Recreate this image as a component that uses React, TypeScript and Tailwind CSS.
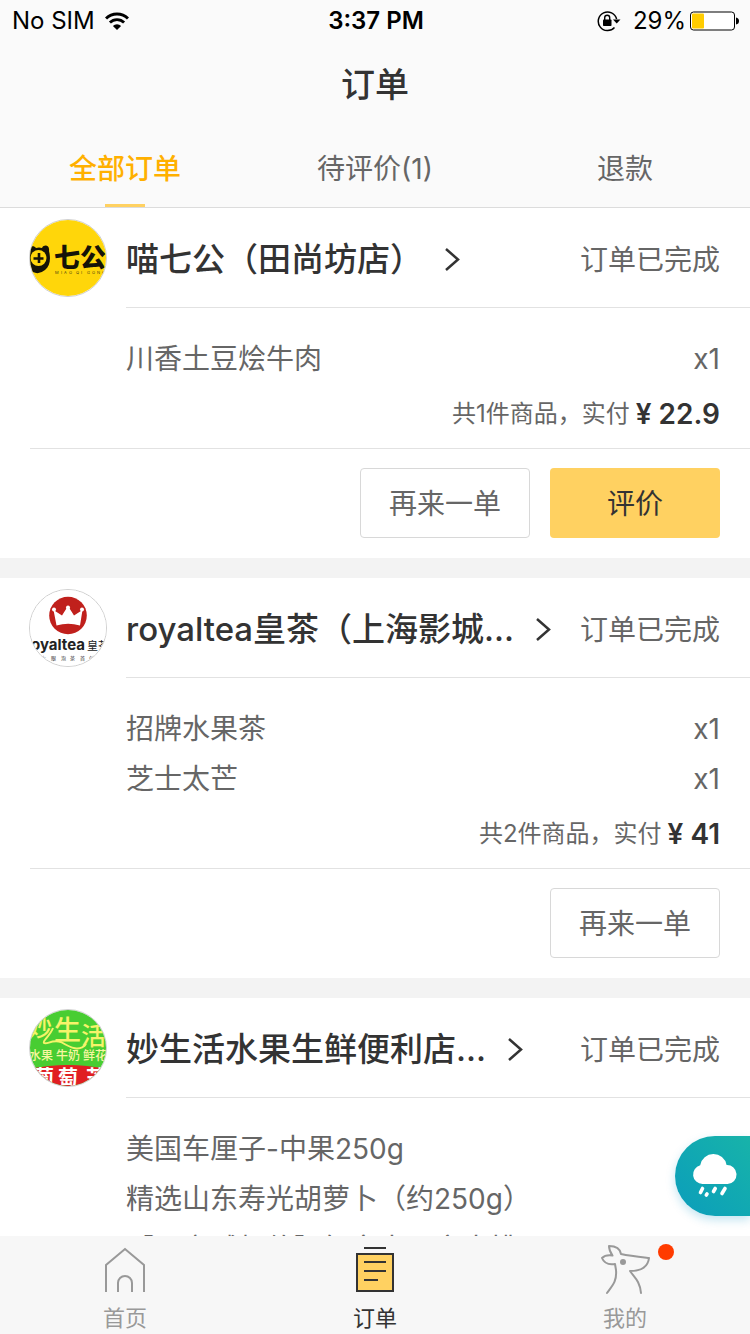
import React from "react";

type Item = { name: string; qty: number };
type Order = {
  shop: string;
  logo: React.ReactNode;
  status: string;
  items: Item[];
  total?: { count: number; price: string };
  canReview?: boolean;
};

const cjk = "'Noto Sans CJK SC', sans-serif";

function CatLogo() {
  return (
    <svg viewBox="0 0 76 76" className="size-full" aria-hidden="true">
      <rect width="76" height="76" fill="#ffd60a" />
      <path d="M0 29 C0 26 4 25 6 28 Q9 27 12 28 C14 24 20 25 19 31 C21 39 20 46 15 50 Q9 55 3 52 L0 50 Z" fill="#151308" />
      <circle cx="8.500" cy="38" r="8" fill="#ffd60a" />
      <path d="M3.500 38.500 H13.500 M9 33 V43" stroke="#151308" strokeWidth="2.600" />
      <text x="24" y="47" fontSize="26" fontWeight="900" fill="#151308" fontFamily={cjk}>七</text>
      <text x="50" y="47" fontSize="26" fontWeight="900" fill="#151308" fontFamily={cjk}>公</text>
      <text x="25 31 34 39 46 51 57 62 67 72" y="54" fontSize="4" fill="#4c4310" fontFamily="Inter, sans-serif">MIAOQIGONG</text>
    </svg>
  );
}

function TeaLogo() {
  return (
    <svg viewBox="0 0 76 76" className="size-full" aria-hidden="true">
      <rect width="76" height="76" fill="#fff" />
      <circle cx="38" cy="25.500" r="18.800" fill="#c0201c" />
      <path d="M26.500 35.500 L23.500 20 L32 25.500 L38 16 L44 25.500 L52.500 20 L50 35.500 Q38 32 26.500 35.500 Z" fill="#fff" />
      <circle cx="24" cy="19.500" r="2" fill="#fff" />
      <circle cx="38" cy="17.500" r="2" fill="#fff" />
      <circle cx="52" cy="19.500" r="2" fill="#fff" />
      <text x="55" y="60" textAnchor="end" fontSize="15" fontWeight="700" fill="#222" fontFamily="Inter, sans-serif">royaltea</text>
      <text x="57" y="60" fontSize="11" fill="#222" fontFamily={cjk}>皇茶</text>
      <text y="70" fontSize="5" fill="#333" fontFamily={cjk}>
        <tspan x="11">大</tspan><tspan x="21">眼</tspan><tspan x="31">泡</tspan><tspan x="40">茶</tspan><tspan x="50">首</tspan><tspan x="59">创</tspan>
      </text>
    </svg>
  );
}

function FruitLogo() {
  return (
    <svg viewBox="0 0 76 76" className="size-full" aria-hidden="true">
      <rect width="76" height="76" fill="#48cd32" />
      <path d="M0 59 Q38 51 76 59 V76 H0 Z" fill="#e01e22" />
      <text fontFamily={cjk} fontWeight="500" fill="#f6f36a">
        <tspan x="-2" y="26" fontSize="24">妙</tspan><tspan x="24" y="30" fontSize="27">生</tspan><tspan x="51" y="35" fontSize="25">活</tspan>
      </text>
      <path d="M23 18 C20 26 12 31 14 33 C17 35 22 29 31 32 C41 38 50 42 56 34" fill="none" stroke="#f6f36a" strokeWidth="2" />
      <text fontFamily={cjk} fontSize="12" fontWeight="500" fill="#f8f6a0" y="50">
        <tspan x="-1">水果</tspan><tspan x="26">牛奶</tspan><tspan x="53">鲜花</tspan>
      </text>
      <text fontFamily={cjk} fontSize="20" fontWeight="700" fill="#fff" y="75">
        <tspan x="4">葡</tspan><tspan x="28">萄</tspan><tspan x="56">芒</tspan>
      </text>
    </svg>
  );
}

const orders: Order[] = [
  {
    shop: "喵七公（田尚坊店）",
    logo: <CatLogo />,
    status: "订单已完成",
    items: [{ name: "川香土豆烩牛肉", qty: 1 }],
    total: { count: 1, price: "22.9" },
    canReview: true,
  },
  {
    shop: "royaltea皇茶（上海影城...",
    logo: <TeaLogo />,
    status: "订单已完成",
    items: [
      { name: "招牌水果茶", qty: 1 },
      { name: "芝士太芒", qty: 1 },
    ],
    total: { count: 2, price: "41" },
  },
  {
    shop: "妙生活水果生鲜便利店...",
    logo: <FruitLogo />,
    status: "订单已完成",
    items: [
      { name: "美国车厘子-中果250g", qty: 0 },
      { name: "精选山东寿光胡萝卜（约250g）", qty: 0 },
      { name: "【买立减超值】红富士国产大桃", qty: 0 },
    ],
  },
];

const tabs = [
  { label: "全部订单", href: "#all", active: true },
  { label: "待评价(1)", href: "#review", active: false },
  { label: "退款", href: "#refund", active: false },
];

function StatusBar() {
  return (
    <div className="grid h-10 grid-cols-3 items-center pt-px pr-2.5 pl-3 text-2xl text-black">
      <div className="flex items-center gap-2.5">
        <span>No SIM</span>
        <svg viewBox="0 0 24 18" className="h-[18px] w-6" aria-label="Wi-Fi">
          <path d="M1 6.500 A15.500 15.500 0 0 1 23 6.500" fill="none" stroke="#000" strokeWidth="3" />
          <path d="M4.900 10.600 A10 10 0 0 1 19.100 10.600" fill="none" stroke="#000" strokeWidth="2.800" />
          <path d="M12 18 L7.900 13.900 A5.800 5.800 0 0 1 16.100 13.900 Z" fill="#000" />
        </svg>
      </div>
      <div className="text-center font-semibold whitespace-nowrap">3:37 PM</div>
      <div className="flex items-center justify-end">
        <svg viewBox="0 0 24 22" className="mr-3 h-[22px] w-6" aria-label="Rotation lock">
          <path d="M19.600 9 A9.300 9.300 0 1 0 17.500 17.500" fill="none" stroke="#000" strokeWidth="1.500" />
          <path d="M16 9.500 H23.500 L19.700 13.500 Z" fill="#000" />
          <rect x="6" y="9.500" width="8.500" height="6.500" rx="0.800" fill="#000" />
          <path d="M7.700 10 V7.800 A2.500 2.500 0 0 1 12.700 7.800 V10" fill="none" stroke="#000" strokeWidth="1.400" />
        </svg>
        <span className="mr-1">29%</span>
        <svg viewBox="0 0 50 20" className="h-5 w-[50px]" aria-label="Battery">
          <rect x="0.500" y="1" width="44" height="18" rx="3" fill="#fff" stroke="#000" />
          <rect x="2" y="2.500" width="12" height="15" rx="1" fill="#ffcc00" />
          <path d="M46 6.500 Q49 7 49 10 Q49 13 46 13.500 Z" fill="#000" />
        </svg>
      </div>
    </div>
  );
}

function OrderCard({ order }: { order: Order }) {
  return (
    <article className="bg-white">
      <div className="flex">
        <div className="w-[126px] shrink-0 pt-[11px] pl-[29px]">
          <div className="size-[78px] overflow-hidden rounded-full border border-[#d0d0d0]">{order.logo}</div>
        </div>
        <div className="flex h-[100px] min-w-0 flex-1 items-center justify-between border-b border-[#e2e2e2] pt-[5px] pr-[30px]">
          <a href="#shop" className="flex items-center gap-[21px] text-[33px] font-medium whitespace-nowrap text-[#333]">
            <h2>{order.shop}</h2>
            <svg viewBox="0 0 16 24" className="h-6 w-4" fill="none" stroke="#333" strokeWidth="2.500" aria-hidden="true">
              <path d="M2 1 L14 11.500 L2 22" />
            </svg>
          </a>
          <span className="text-[28px] whitespace-nowrap text-[#666]">{order.status}</span>
        </div>
      </div>
      <ul className="pt-[26px] pr-[30px] pl-[126px] text-[28px] leading-[50px] text-[#666]">
        {order.items.map((item) => (
          <li key={item.name} className="flex justify-between whitespace-nowrap">
            <span>{item.name}</span>
            {item.qty > 0 && <span>x{item.qty}</span>}
          </li>
        ))}
      </ul>
      {order.total && (
        <>
          <div className="ml-[30px] flex h-[65px] items-center justify-end gap-1.5 border-b border-[#e2e2e2] pr-[30px] pb-1">
            <span className="text-2xl text-[#666]">共{order.total.count}件商品，实付</span>
            <span className="text-[28px] font-semibold text-[#333]">¥ {order.total.price}</span>
          </div>
          <div className="flex justify-end gap-5 px-[30px] pt-[19px] pb-5 text-[28px]">
            <button type="button" className="h-[70px] w-[170px] rounded border border-[#d8d8d8] pt-0.5 text-[#666]">再来一单</button>
            {order.canReview && (
              <button type="button" className="h-[70px] w-[170px] rounded bg-[#ffd161] pt-0.5 text-[#333]">评价</button>
            )}
          </div>
        </>
      )}
    </article>
  );
}

export default function App() {
  return (
    <div className="relative flex h-screen flex-col overflow-hidden bg-[#f3f3f3] font-[Inter,'Noto_Sans_CJK_SC',sans-serif]">
      <header className="shrink-0 border-b border-[#dcdcdc] bg-[#fafafa]">
        <StatusBar />
        <h1 className="flex h-[88px] items-center justify-center text-[34px] font-medium text-[#333]">订单</h1>
        <nav className="grid h-[79px] grid-cols-3 text-[28px] text-[#666]">
          {tabs.map((tab) => (
            <a
              key={tab.href}
              href={tab.href}
              className={tab.active ? "flex flex-col items-center pt-[5px] font-medium text-[#ffb000]" : "flex flex-col items-center pt-[5px]"}
            >
              <span className="flex flex-1 items-center">{tab.label}</span>
              <span className={tab.active ? "h-[3px] w-10 bg-[#ffd161]" : "h-[3px] w-10"} />
            </a>
          ))}
        </nav>
      </header>

      <main className="flex min-h-0 flex-1 flex-col gap-5 overflow-hidden">
        {orders.map((order) => (
          <OrderCard key={order.shop} order={order} />
        ))}
      </main>

      <nav className="grid h-[98px] shrink-0 grid-cols-3 bg-[#f7f7f7] text-[22px] text-[#999]">
        <a href="#home" className="flex flex-col items-center pt-2">
          <svg viewBox="0 0 50 52" className="h-[52px] w-[50px]" fill="none" stroke="#999" strokeWidth="2" aria-hidden="true">
            <path d="M6 48 V21 L25 5 L44 21 V48 M18 48 V39 A7 7 0 0 1 32 39 V48" />
          </svg>
          <span className="leading-[44px]">首页</span>
        </a>
        <a href="#orders" className="flex flex-col items-center pt-2 text-[#333]">
          <svg viewBox="0 0 50 52" className="h-[52px] w-[50px]" stroke="#333" strokeWidth="2" aria-hidden="true">
            <path d="M7 10 H43 V47 H7 Z" fill="#ffd161" />
            <path d="M14 4 H36 M14 18 H36 M14 27 H36 M14 36 H28" />
          </svg>
          <span className="leading-[44px]">订单</span>
        </a>
        <a href="#me" className="flex flex-col items-center pt-2">
          <span className="relative">
            <svg viewBox="0 0 50 52" className="h-[52px] w-[50px]" fill="none" stroke="#999" strokeWidth="2" strokeLinecap="round" strokeLinejoin="round" aria-hidden="true">
              <path d="M7 49 C13 41 17 37 16 26 L15 20 C9 21 4 19 2 14 C5 11 9 11 12.500 11.500 C10 8 9 5 9 2 C15 2 20 4 21 10 C30 12 40 13 49 14 C48 23 41 27 30 27 C34 33 40 37 41 49" />
              <circle cx="23" cy="18" r="3" fill="#999" stroke="none" />
            </svg>
            <span className="absolute top-0 -right-6 size-4 rounded-full bg-[#ff3b00]" />
          </span>
          <span className="leading-[44px]">我的</span>
        </a>
      </nav>

      <button
        type="button"
        aria-label="雨天提醒"
        className="absolute right-0 bottom-[118px] flex h-20 w-[75px] items-center rounded-l-full bg-linear-to-tr from-[#0c9dbb] to-[#18b3a9] pl-[17px] shadow-[0_4px_10px_rgba(20,150,200,0.25)]"
      >
        <svg viewBox="0 0 46 46" className="size-[46px] shrink-0" aria-hidden="true">
          <path d="M10.500 31 A9.500 9.500 0 0 1 8.200 12.300 A13.400 13.400 0 0 1 34.600 12 A9.500 9.500 0 0 1 35.500 31 Z" fill="#fff" />
          <path d="M10.500 35.500 L8.500 39.500 M15 41 L14.300 42 M23.200 35.500 L21.500 38.500 M33 35.500 L30 40.500" stroke="#fff" strokeWidth="3.600" strokeLinecap="round" />
        </svg>
      </button>
    </div>
  );
}
